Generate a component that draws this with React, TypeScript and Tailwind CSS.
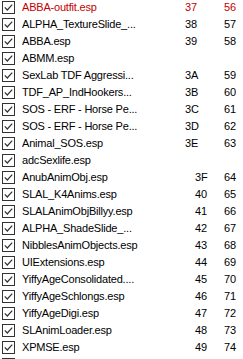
import React from 'react'

type Plugin = {
  name: string
  hex?: string
  idx?: string
  red?: boolean
  shifted?: boolean
}

const plugins: Plugin[] = [
  { name: 'ABBA-outfit.esp', hex: '37', idx: '56', red: true },
  { name: 'ALPHA_TextureSlide_...', hex: '38', idx: '57' },
  { name: 'ABBA.esp', hex: '39', idx: '58' },
  { name: 'ABMM.esp' },
  { name: 'SexLab TDF Aggressi...', hex: '3A', idx: '59' },
  { name: 'TDF_AP_IndHookers...', hex: '3B', idx: '60' },
  { name: 'SOS - ERF - Horse Pe...', hex: '3C', idx: '61' },
  { name: 'SOS - ERF - Horse Pe...', hex: '3D', idx: '62' },
  { name: 'Animal_SOS.esp', hex: '3E', idx: '63' },
  { name: 'adcSexlife.esp' },
  { name: 'AnubAnimObj.esp', hex: '3F', idx: '64', shifted: true },
  { name: 'SLAL_K4Anims.esp', hex: '40', idx: '65', shifted: true },
  { name: 'SLALAnimObjBillyy.esp', hex: '41', idx: '66', shifted: true },
  { name: 'ALPHA_ShadeSlide_...', hex: '42', idx: '67', shifted: true },
  { name: 'NibblesAnimObjects.esp', hex: '43', idx: '68', shifted: true },
  { name: 'UIExtensions.esp', hex: '44', idx: '69', shifted: true },
  { name: 'YiffyAgeConsolidated....', hex: '45', idx: '70', shifted: true },
  { name: 'YiffyAgeSchlongs.esp', hex: '46', idx: '71', shifted: true },
  { name: 'YiffyAgeDigi.esp', hex: '47', idx: '72', shifted: true },
  { name: 'SLAnimLoader.esp', hex: '48', idx: '73', shifted: true },
  { name: 'XPMSE.esp', hex: '49', idx: '74', shifted: true },
  { name: 'RaceMenuPlugin.esp', hex: '4A', idx: '75', shifted: true },
]

function CheckBox() {
  return (
    <svg width="13" height="13" viewBox="0 0 13 13" className="shrink-0">
      <rect x="0.5" y="0.5" width="12" height="12" fill="#fff" stroke="#333" />
      <path d="M2.8 6.4 L5.3 9 L10.2 3.6" fill="none" stroke="#333" strokeWidth="1.2" />
    </svg>
  )
}

export default function App() {
  return (
    <div
      className="w-[243px] h-[359px] overflow-hidden bg-white"
      style={{ fontFamily: '"Liberation Sans", Arial, sans-serif' }}
    >
      <div className="-mt-[1px] flex flex-col">
        {plugins.map((p, i) => (
          <div
            key={i}
            className={`flex items-center h-[17px] text-[11px] leading-none whitespace-nowrap ${
              p.red ? 'text-[#c40000]' : 'text-black'
            }`}
          >
            <div className="ml-[2px]">
              <CheckBox />
            </div>
            <div className="ml-[7px] w-[163px] overflow-hidden tracking-[-0.2px]">{p.name}</div>
            <div className={`w-[39px] ${p.shifted ? 'pl-[10px]' : ''}`}>{p.hex}</div>
            <div>{p.idx}</div>
          </div>
        ))}
      </div>
    </div>
  )
}
